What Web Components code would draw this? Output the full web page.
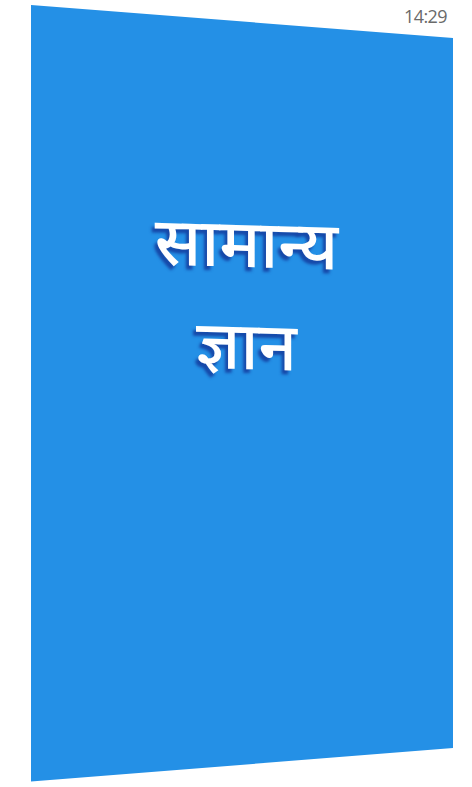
<!DOCTYPE html>
<html lang="ne">
<head>
<meta charset="utf-8">
<title>सामान्य ज्ञान</title>
<style>
  html, body { margin: 0; height: 100%; background: #fff; overflow: hidden; }
</style>
</head>
<body>
<phone-screen>
  <status-clock slot="status">14:29</status-clock>
  <splash-panel>
    <span>सामान्य</span>
    <span>ज्ञान</span>
  </splash-panel>
</phone-screen>

<script>
class PhoneScreen extends HTMLElement {
  constructor() {
    super();
    this.attachShadow({ mode: "open" });
    this.shadowRoot.innerHTML = `
      <style>
        :host {
          display: block;
          position: relative;
          width: 472px;
          height: 787px;
          box-sizing: border-box;
          padding: 5px 19px 5.5px 31px;
          background: #fff;
        }
        .status {
          position: absolute;
          top: 5px;
          right: 25px;
        }
      </style>
      <slot></slot>
      <div class="status"><slot name="status"></slot></div>
    `;
  }
}

class StatusClock extends HTMLElement {
  constructor() {
    super();
    this.attachShadow({ mode: "open" });
    this.shadowRoot.innerHTML = `
      <style>
        :host {
          display: block;
          font: 400 18px/22px "Open Sans", sans-serif;
          letter-spacing: -0.6px;
          color: #6a6a6a;
        }
      </style>
      <slot></slot>
    `;
  }
}

class SplashPanel extends HTMLElement {
  constructor() {
    super();
    this.attachShadow({ mode: "open" });
    this.shadowRoot.innerHTML = `
      <style>
        :host {
          display: block;
          height: 100%;
          background: #2490e6;
          clip-path: polygon(0 0, 100% 4.25%, 100% 95.7%, 0 100%);
        }
        .title {
          display: flex;
          flex-direction: column;
          align-items: center;
          gap: 22px;
          padding: 206px 0 0 9px;
          font: 500 67px/80px "Noto Sans Devanagari", "Lohit Devanagari", "Noto Sans", sans-serif;
          color: #fff;
          text-shadow: -3px 4px 3px #1648a8;
          transform: skewY(1.6deg);
        }
      </style>
      <div class="title"><slot></slot></div>
    `;
  }
}

customElements.define("phone-screen", PhoneScreen);
customElements.define("status-clock", StatusClock);
customElements.define("splash-panel", SplashPanel);
</script>
</body>
</html>
